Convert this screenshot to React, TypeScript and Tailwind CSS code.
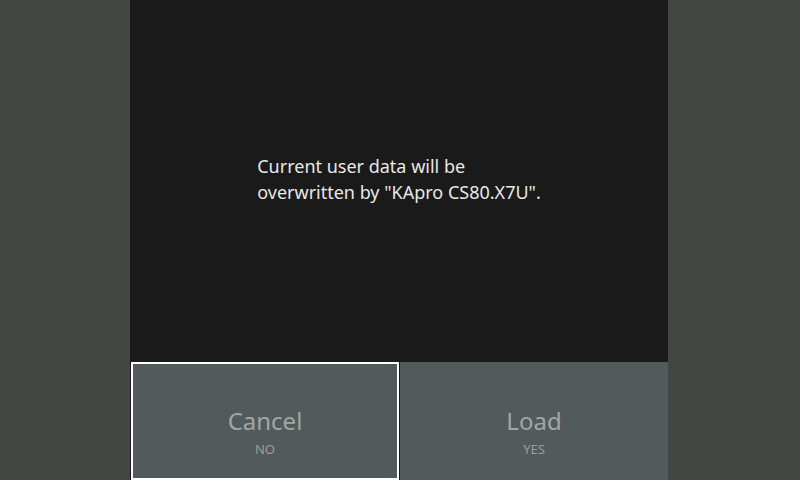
import React from "react";

export default function App() {
  return (
    <div
      className="w-[800px] h-[480px] bg-[#434542] flex overflow-hidden"
      style={{ fontFamily: '"Noto Sans", "Open Sans", sans-serif' }}
    >
      <div className="ml-[130px] w-[538px] h-full bg-[#1a1a1a] flex flex-col">
        <div className="flex-1 flex items-center justify-center">
          <p className="text-[18px] leading-[26px] text-[#e8e8e8] pb-[4px]">
            Current user data will be
            <br />
            overwritten by "KApro CS80.X7U".
          </p>
        </div>
        <div className="h-[118px] flex pl-px gap-px">
          <button className="w-[268px] h-full bg-[#525a5b] border-2 border-white flex flex-col items-center justify-center pt-[22px]">
            <span className="text-[24px] leading-[30px] text-[#a2a6a7]">Cancel</span>
            <span className="text-[13px] leading-[18px] text-[#9a9e9f] mt-[4px]">NO</span>
          </button>
          <button className="w-[268px] h-full bg-[#525a5b] flex flex-col items-center justify-center pt-[22px]">
            <span className="text-[24px] leading-[30px] text-[#a2a6a7]">Load</span>
            <span className="text-[13px] leading-[18px] text-[#9a9e9f] mt-[4px]">YES</span>
          </button>
        </div>
      </div>
    </div>
  );
}
